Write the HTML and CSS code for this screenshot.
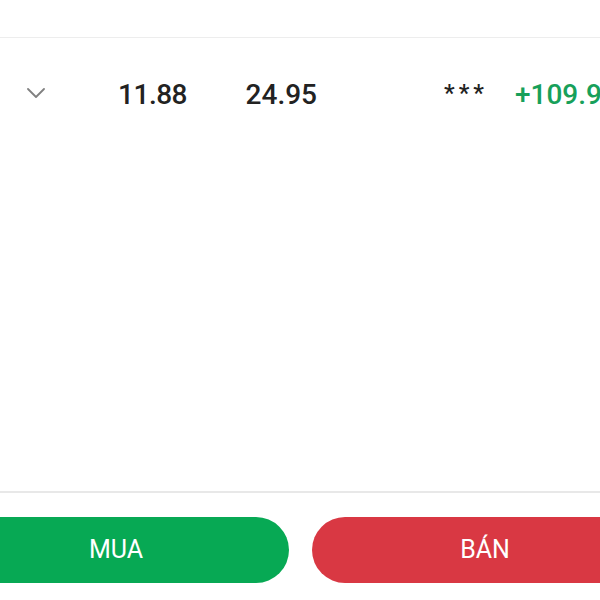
FILE: index.html
```html
<!DOCTYPE html>
<html lang="vi">
<head>
  <meta charset="UTF-8" />
  <meta name="viewport" content="width=device-width, initial-scale=1.0"/>
  <title>Lệnh giao dịch</title>
  <link rel="stylesheet" href="styles.css">
</head>
<body>

  <div class="header"></div>

  <!-- Position row -->
  <div class="content">
    <div class="row">
      <span class="toggle">
        <svg width="18" height="10" viewBox="0 0 18 10">
          <polyline points="1,1 9,9 17,1" fill="none" stroke="#808080" stroke-width="1.8" stroke-linecap="round" stroke-linejoin="round"/>
        </svg>
      </span>
      <span class="cell price">11.88</span>
      <span class="cell last">24.95</span>
      <span class="cell hidden-val">***</span>
      <span class="cell pnl">+109.95%</span>
    </div>
  </div>

  <!-- Buy / sell -->
  <div class="actions">
    <button class="btn buy">MUA</button>
    <button class="btn sell">BÁN</button>
  </div>

</body>
</html>
```

FILE: styles.css
```css
body {
  margin: 0;
  font-family: Roboto, "Noto Sans", Arial, sans-serif;
  background: #fff;
  overflow: hidden;
  width: 600px;
  height: 600px;
}

.header {
  height: 37px;
  border-bottom: 1px solid #ededed;
}

.content {
  height: 453px;
  border-bottom: 2px solid #e8e8e8;
  overflow: hidden;
}

.row {
  display: flex;
  align-items: flex-start;
  padding-top: 37px;
  white-space: nowrap;
  font-size: 28px;
  line-height: 40px;
  font-weight: 500;
  color: #222;
}

.toggle {
  flex: none;
  margin-left: 27px;
  width: 19px;
  padding-top: 13px;
  line-height: 0;
}

.cell {
  display: block;
  flex: none;
}

.price {
  width: 141px;
  text-align: right;
  letter-spacing: -0.5px;
}

.last {
  width: 130px;
  text-align: right;
}

.hidden-val {
  width: 171px;
  text-align: right;
  font-size: 24px;
  line-height: 36px;
  letter-spacing: 4px;
}

.pnl {
  margin-left: 27px;
  color: #17a05a;
}

.actions {
  display: flex;
  gap: 23px;
  margin-left: -57px;
  padding-top: 24px;
}

.btn {
  flex: none;
  width: 346px;
  height: 66px;
  border: none;
  border-radius: 33px;
  color: #fff;
  font-family: Roboto, "Noto Sans", Arial, sans-serif;
  font-size: 25px;
  font-weight: 400;
  line-height: 66px;
  padding: 0;
}

.buy {
  background: #07a954;
}

.sell {
  background: #d93843;
}
```
